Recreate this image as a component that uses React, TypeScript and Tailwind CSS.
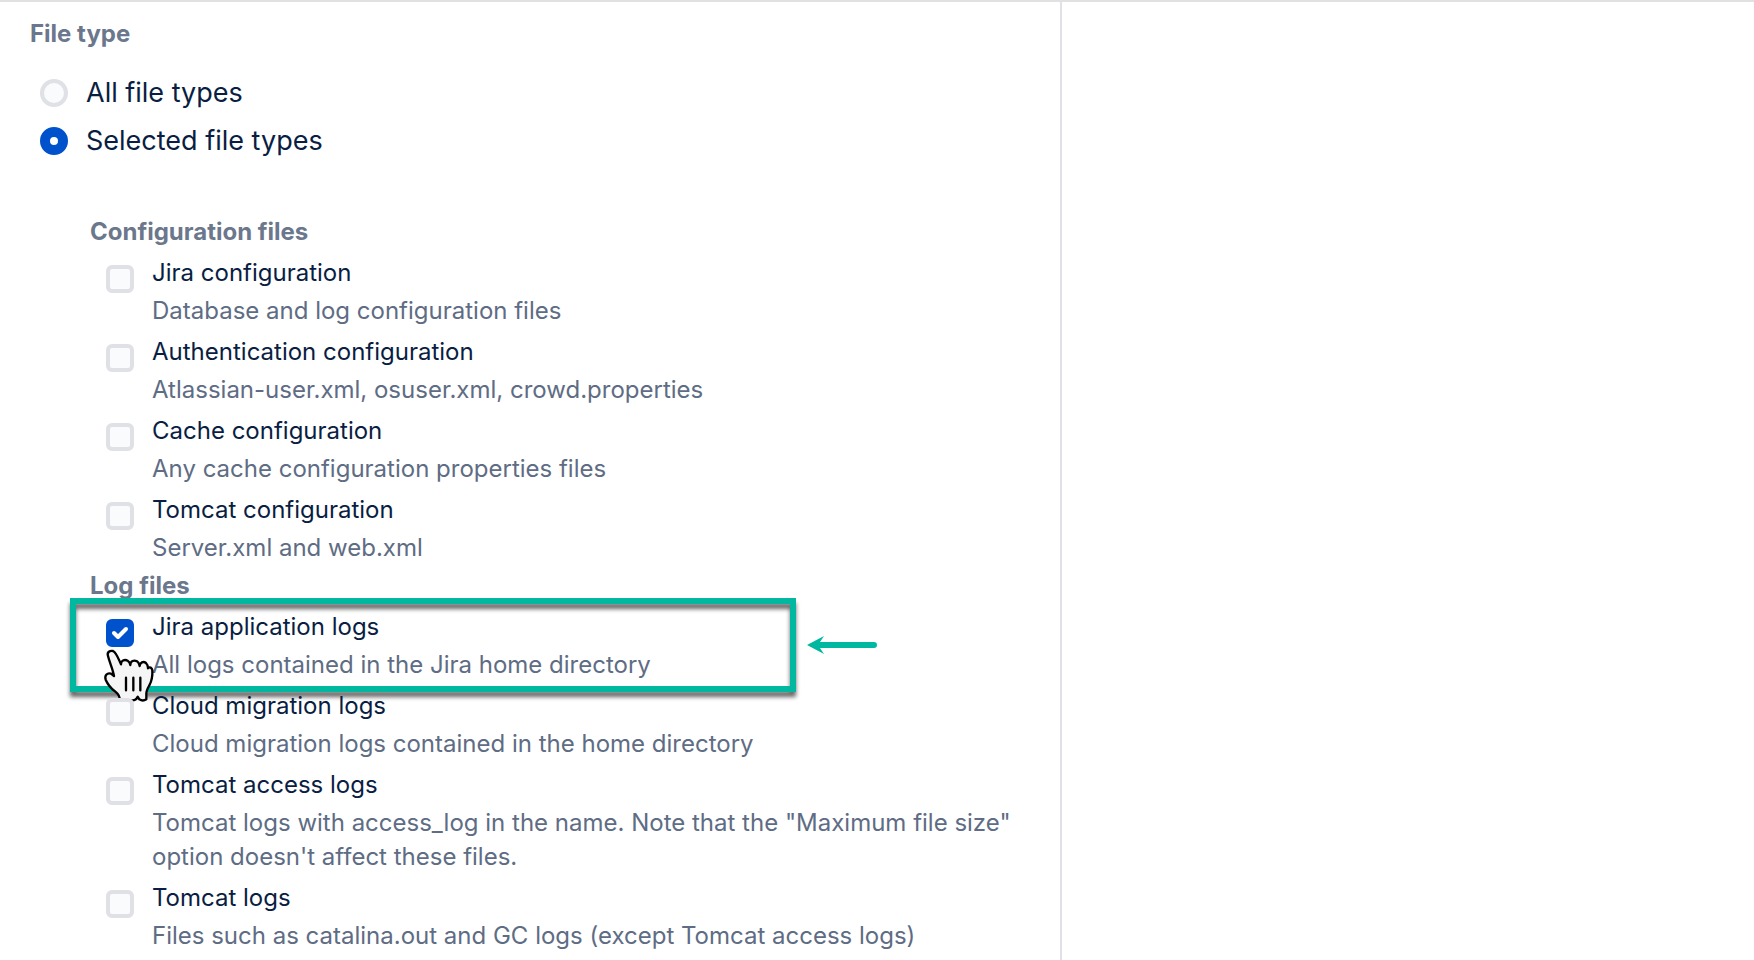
import { useState } from "react";

type FileOption = {
  id: string;
  title: string;
  description: string;
  highlighted?: boolean;
};

const configurationFiles: FileOption[] = [
  { id: "jira-config", title: "Jira configuration", description: "Database and log configuration files" },
  {
    id: "auth-config",
    title: "Authentication configuration",
    description: "Atlassian-user.xml, osuser.xml, crowd.properties",
  },
  { id: "cache-config", title: "Cache configuration", description: "Any cache configuration properties files" },
  { id: "tomcat-config", title: "Tomcat configuration", description: "Server.xml and web.xml" },
];

const logFiles: FileOption[] = [
  {
    id: "jira-logs",
    title: "Jira application logs",
    description: "All logs contained in the Jira home directory",
    highlighted: true,
  },
  {
    id: "migration-logs",
    title: "Cloud migration logs",
    description: "Cloud migration logs contained in the home directory",
  },
  {
    id: "access-logs",
    title: "Tomcat access logs",
    description:
      'Tomcat logs with access_log in the name. Note that the "Maximum file size" option doesn\'t affect these files.',
  },
  {
    id: "tomcat-logs",
    title: "Tomcat logs",
    description: "Files such as catalina.out and GC logs (except Tomcat access logs)",
  },
];

function HandCursor() {
  return (
    <svg className="pointer-events-none absolute top-[34px] -left-2 size-[62px]" viewBox="0 0 186 186" fill="none" aria-hidden="true">
      <path
        d="M30 36C26 24 36 19 45 21C55 25 61 44 69 61C68 50 80 45 89 50C94 53 96 58 97 63C97 51 108 47 117 52C122 55 124 60 125 66C126 55 136 51 144 57C148 61 150 66 150 73C155 67 162 71 163 79C164 96 161 111 154 124C149 133 145 140 145 149L145 166C139 170 130 170 124 166L119 158C116 165 111 169 103 169L65 169C66 156 60 149 52 143C40 134 29 121 23 107C19 94 28 85 39 89L48 96C45 77 35 56 30 36Z"
        fill="#f5f5f5"
        stroke="#000"
        strokeWidth="7"
        strokeLinejoin="round"
      />
      <path d="M84 101V139M106 101V139M127 101V139" stroke="#000" strokeWidth="7" strokeLinecap="round" />
    </svg>
  );
}

function Highlight() {
  return (
    <div className="pointer-events-none absolute -top-3 -left-9 flex items-center gap-[11px]">
      <div className="h-[94px] w-[726px] border-6 border-[#00b8a0] drop-shadow-[0_5px_2px_rgba(0,0,0,0.6)]" />
      <svg className="h-[18px] w-[70px]" viewBox="0 0 70 18" aria-hidden="true">
        <path d="M0 9L17 0L13 6H67A3 3 0 0 1 67 12H13L17 18Z" fill="#00b8a0" />
      </svg>
    </div>
  );
}

function FileCheckbox({ option, defaultChecked }: { option: FileOption; defaultChecked: boolean }) {
  return (
    <li className="relative flex items-start gap-[18px]">
      <span className="mt-[9px] grid shrink-0 *:col-start-1 *:row-start-1">
        <input
          type="checkbox"
          id={option.id}
          defaultChecked={defaultChecked}
          aria-describedby={`${option.id}-description`}
          className="peer size-7 appearance-none rounded-md border-4 border-[#dfe1e6] bg-[#fafbfc] checked:border-[#0052cc] checked:bg-[#0052cc]"
        />
        <svg className="pointer-events-none hidden size-7 peer-checked:block" viewBox="0 0 28 28" fill="none" aria-hidden="true">
          <path d="M8 14L12 18L20 10" stroke="#fff" strokeWidth="4" strokeLinecap="round" strokeLinejoin="round" />
        </svg>
      </span>
      <div className="space-y-1">
        <label htmlFor={option.id} className="block text-[#091e42]">
          {option.title}
        </label>
        <p id={`${option.id}-description`} className="text-[#5e6c84]">
          {option.description}
        </p>
      </div>
      {option.highlighted && (
        <>
          <Highlight />
          <HandCursor />
        </>
      )}
    </li>
  );
}

function FileGroup({ title, options, checked = [] }: { title: string; options: FileOption[]; checked?: string[] }) {
  return (
    <section>
      <h3 className="mb-[7px] font-bold text-[#6b778c]">{title}</h3>
      <ul className="space-y-[7px] pl-4">
        {options.map((option) => (
          <FileCheckbox key={option.id} option={option} defaultChecked={checked.includes(option.id)} />
        ))}
      </ul>
    </section>
  );
}

export default function App() {
  const [fileType, setFileType] = useState("selected");

  const radioClass =
    "size-7 shrink-0 appearance-none rounded-full border-4 border-[#dfe1e6] bg-[#fafbfc] checked:border-10 checked:border-[#0052cc] checked:bg-white";

  return (
    <main className="grid min-h-screen grid-cols-[1062fr_692fr] border-t-2 border-[#e1e1e1] bg-white font-['Inter',sans-serif] text-[24px] leading-[34px]">
      <form className="border-r-2 border-[#dfe1e6] pt-[15px] pr-8 pl-[30px]">
        <fieldset>
          <legend className="font-bold text-[#6b778c]">File type</legend>
          <div className="mt-[18px] pl-2.5 text-[27px] leading-[48px] text-[#091e42]">
            <label className="flex items-center gap-[18px]">
              <input
                type="radio"
                name="file-type"
                className={radioClass}
                checked={fileType === "all"}
                onChange={() => setFileType("all")}
              />
              All file types
            </label>
            <label className="flex items-center gap-[18px]">
              <input
                type="radio"
                name="file-type"
                className={radioClass}
                checked={fileType === "selected"}
                onChange={() => setFileType("selected")}
              />
              Selected file types
            </label>
          </div>
        </fieldset>
        <div className="mt-[50px] space-y-1 pl-[60px]">
          <FileGroup title="Configuration files" options={configurationFiles} />
          <FileGroup title="Log files" options={logFiles} checked={["jira-logs"]} />
        </div>
      </form>
      <aside />
    </main>
  );
}
